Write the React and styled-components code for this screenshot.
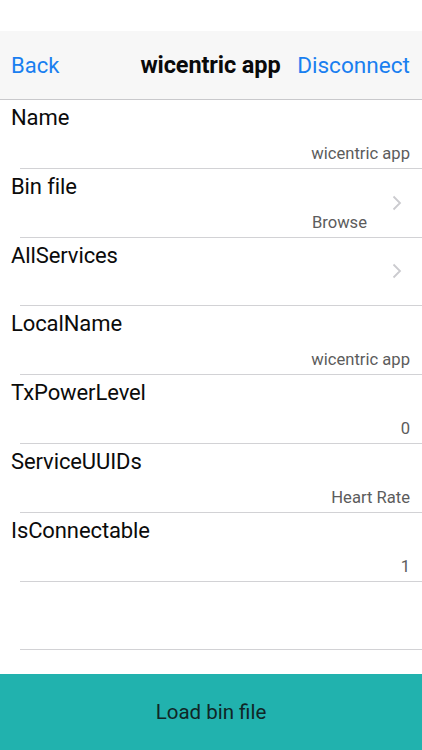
import React from 'react';
import styled, { createGlobalStyle } from 'styled-components';

const GlobalStyle = createGlobalStyle`
  html, body {
    margin: 0;
    padding: 0;
    background: #ffffff;
  }
  body {
    font-family: Roboto, "Liberation Sans", Arial, sans-serif;
    -webkit-font-smoothing: antialiased;
  }
`;

const StyledScreen = styled.div`
  width: 422px;
  height: 750px;
  display: flex;
  flex-direction: column;
  overflow: hidden;
  background: #ffffff;
`;

const StyledStatusBar = styled.div`
  height: 31px;
  flex-shrink: 0;
  background: #ffffff;
`;

const StyledNavBar = styled.div`
  height: 68px;
  flex-shrink: 0;
  display: grid;
  grid-template-columns: 1fr auto 1fr;
  align-items: center;
  padding: 0 12px 0 11px;
  background: #f7f7f7;
  border-bottom: 1px solid #c9c9cc;
`;

const StyledNavButton = styled.span`
  font-size: ${({align}) => align === 'right' ? '22.6px' : '22px'};
  color: #1a7ff0;
  justify-self: ${({align}) => align === 'right' ? 'end' : 'start'};
`;

const StyledTitle = styled.span`
  font-size: 23.5px;
  font-weight: 700;
  color: #0a0a0a;
  letter-spacing: -0.1px;
`;

const StyledList = styled.div`
  flex: 1;
  display: flex;
  flex-direction: column;
`;

const StyledRow = styled.div`
  height: 67.8px;
  display: flex;
`;

const StyledRowMain = styled.div`
  flex: 1;
  display: flex;
  flex-direction: column;
  justify-content: space-between;
  padding: 5px 0 4px 11px;
  padding-right: ${({hasAccessory}) => hasAccessory ? '0' : '12px'};
`;

const StyledLabel = styled.div`
  font-size: 22px;
  line-height: 26px;
  color: #0b0b0b;
  letter-spacing: -0.1px;
`;

const StyledValue = styled.div`
  font-size: 16.6px;
  line-height: 20px;
  color: #5c5c5c;
  text-align: right;
`;

const StyledAccessory = styled.div`
  width: 55px;
  display: flex;
  align-items: center;
  justify-content: flex-end;
  padding-right: 20px;
  box-sizing: border-box;
`;

const StyledDivider = styled.div`
  height: 1px;
  margin-left: 20px;
  background: #d2d2d5;
`;

const StyledLoadButton = styled.div`
  height: 76px;
  flex-shrink: 0;
  display: flex;
  align-items: center;
  justify-content: center;
  background: #21b2ae;
  color: #102626;
  font-size: 20.5px;
`;

const Chevron = () => (
  <svg width="10" height="16" viewBox="0 0 10 16">
    <polyline points="1.5,1.5 8,8 1.5,14.5" fill="none" stroke="#cbcbcf" strokeWidth="1.8" />
  </svg>
);

const rows = [
  {label: 'Name', value: 'wicentric app'},
  {label: 'Bin file', value: 'Browse', accessory: true},
  {label: 'AllServices', value: '', accessory: true},
  {label: 'LocalName', value: 'wicentric app'},
  {label: 'TxPowerLevel', value: '0'},
  {label: 'ServiceUUIDs', value: 'Heart Rate'},
  {label: 'IsConnectable', value: '1'},
  {label: '', value: ''},
];

const InfoRow = ({label, value, accessory}) => (
  <>
    <StyledRow>
      <StyledRowMain hasAccessory={accessory}>
        <StyledLabel>{label || '\u00a0'}</StyledLabel>
        <StyledValue>{value || '\u00a0'}</StyledValue>
      </StyledRowMain>
      {accessory ? (
        <StyledAccessory>
          <Chevron />
        </StyledAccessory>
      ) : null}
    </StyledRow>
    <StyledDivider />
  </>
);

const App = () => (
  <>
    <GlobalStyle />
    <StyledScreen>
      <StyledStatusBar />
      <StyledNavBar>
        <StyledNavButton>Back</StyledNavButton>
        <StyledTitle>wicentric app</StyledTitle>
        <StyledNavButton align="right">Disconnect</StyledNavButton>
      </StyledNavBar>
      <StyledList>
        {rows.map((row, i) => (
          <InfoRow key={i} {...row} />
        ))}
      </StyledList>
      <StyledLoadButton>Load bin file</StyledLoadButton>
    </StyledScreen>
  </>
);

export default App;
